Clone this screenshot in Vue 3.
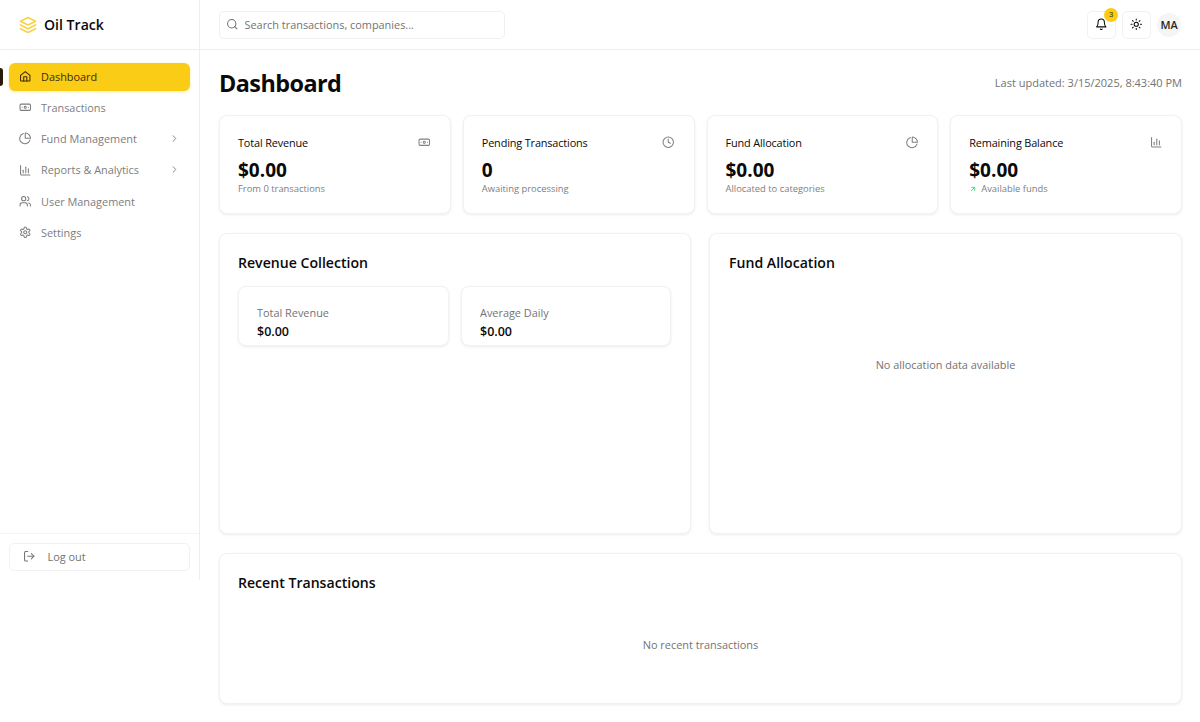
<script setup>
const nav = [
  { label: 'Dashboard', icon: 'home', active: true },
  { label: 'Transactions', icon: 'money' },
  { label: 'Fund Management', icon: 'pie', arrow: true },
  { label: 'Reports & Analytics', icon: 'bars', arrow: true },
  { label: 'User Management', icon: 'users' },
  { label: 'Settings', icon: 'gear' }
]

const stats = [
  { title: 'Total Revenue', value: '$0.00', sub: 'From 0 transactions', icon: 'money' },
  { title: 'Pending Transactions', value: '0', sub: 'Awaiting processing', icon: 'clock' },
  { title: 'Fund Allocation', value: '$0.00', sub: 'Allocated to categories', icon: 'pie' },
  { title: 'Remaining Balance', value: '$0.00', sub: 'Available funds', icon: 'bars', up: true }
]

const paths = {
  home: ['M3 10.5 12 3l9 7.5V20a1 1 0 0 1-1 1H4a1 1 0 0 1-1-1z', 'M9 21v-8h6v8'],
  money: ['M4 6h16a2 2 0 0 1 2 2v8a2 2 0 0 1-2 2H4a2 2 0 0 1-2-2V8a2 2 0 0 1 2-2z', 'M12 10a2 2 0 1 0 0 4 2 2 0 0 0 0-4z', 'M6 12h.01M18 12h.01'],
  pie: ['M21 15.5A10 10 0 1 1 8.5 3', 'M22 12A10 10 0 0 0 12 2v10z'],
  bars: ['M3 3v16a2 2 0 0 0 2 2h16', 'M8 17v-5', 'M13 17V6', 'M18 17v-8'],
  users: ['M16 21v-2a4 4 0 0 0-4-4H6a4 4 0 0 0-4 4v2', 'M9 3a4 4 0 1 0 0 8 4 4 0 0 0 0-8z', 'M22 21v-2a4 4 0 0 0-3-3.87', 'M16 3.13a4 4 0 0 1 0 7.75'],
  gear: ['M12.2 2h-.4a2 2 0 0 0-2 2v.2a2 2 0 0 1-1 1.7l-.4.3a2 2 0 0 1-2 0l-.2-.1a2 2 0 0 0-2.7.7l-.2.4a2 2 0 0 0 .7 2.7l.2.1a2 2 0 0 1 1 1.7v.5a2 2 0 0 1-1 1.8l-.2.1a2 2 0 0 0-.7 2.7l.2.4a2 2 0 0 0 2.7.7l.2-.1a2 2 0 0 1 2 0l.4.3a2 2 0 0 1 1 1.7v.2a2 2 0 0 0 2 2h.4a2 2 0 0 0 2-2v-.2a2 2 0 0 1 1-1.7l.4-.3a2 2 0 0 1 2 0l.2.1a2 2 0 0 0 2.7-.7l.2-.4a2 2 0 0 0-.7-2.7l-.2-.1a2 2 0 0 1-1-1.8v-.5a2 2 0 0 1 1-1.7l.2-.1a2 2 0 0 0 .7-2.7l-.2-.4a2 2 0 0 0-2.7-.7l-.2.1a2 2 0 0 1-2 0l-.4-.3a2 2 0 0 1-1-1.7V4a2 2 0 0 0-2-2z', 'M12 9a3 3 0 1 0 0 6 3 3 0 0 0 0-6z'],
  clock: ['M12 2a10 10 0 1 0 0 20 10 10 0 0 0 0-20z', 'M12 6v6l4 2'],
  chevron: ['m9 18 6-6-6-6'],
  layers: ['M12 2 2 7l10 5 10-5z', 'm2 12 10 5 10-5', 'm2 17 10 5 10-5'],
  search: ['M11 3a8 8 0 1 0 0 16 8 8 0 0 0 0-16z', 'm21 21-4.3-4.3'],
  bell: ['M6 8a6 6 0 0 1 12 0c0 7 3 9 3 9H3s3-2 3-9', 'M10.3 21a1.9 1.9 0 0 0 3.4 0'],
  sun: ['M12 8a4 4 0 1 0 0 8 4 4 0 0 0 0-8z', 'M12 2v2', 'M12 20v2', 'm4.9 4.9 1.4 1.4', 'm17.7 17.7 1.4 1.4', 'M2 12h2', 'M20 12h2', 'm6.3 17.7-1.4 1.4', 'm19.1 4.9-1.4 1.4'],
  logout: ['M9 21H5a2 2 0 0 1-2-2V5a2 2 0 0 1 2-2h4', 'm16 17 5-5-5-5', 'M21 12H9'],
  trend: ['M7 17 17 7', 'M8 7h9v9']
}
</script>

<template>
  <div class="app">
    <aside class="sidebar">
      <div class="brand">
        <svg class="logo" viewBox="0 0 24 24"><path v-for="d in paths.layers" :key="d" :d="d" /></svg>
        <span>Oil Track</span>
      </div>
      <nav class="nav">
        <a v-for="item in nav" :key="item.label" class="nav-item" :class="{ active: item.active }">
          <svg class="icon" viewBox="0 0 24 24"><path v-for="d in paths[item.icon]" :key="d" :d="d" /></svg>
          <span class="nav-label">{{ item.label }}</span>
          <svg v-if="item.arrow" class="icon chevron" viewBox="0 0 24 24"><path v-for="d in paths.chevron" :key="d" :d="d" /></svg>
        </a>
      </nav>
      <div class="logout-wrap">
        <button class="logout">
          <svg class="icon" viewBox="0 0 24 24"><path v-for="d in paths.logout" :key="d" :d="d" /></svg>
          <span>Log out</span>
        </button>
      </div>
    </aside>

    <div class="content">
      <header class="topbar">
        <div class="search">
          <svg class="icon" viewBox="0 0 24 24"><path v-for="d in paths.search" :key="d" :d="d" /></svg>
          <span>Search transactions, companies...</span>
        </div>
        <div class="actions">
          <button class="icon-btn">
            <svg class="icon" viewBox="0 0 24 24"><path v-for="d in paths.bell" :key="d" :d="d" /></svg>
            <span class="badge">3</span>
          </button>
          <button class="icon-btn">
            <svg class="icon" viewBox="0 0 24 24"><path v-for="d in paths.sun" :key="d" :d="d" /></svg>
          </button>
          <div class="avatar">MA</div>
        </div>
      </header>

      <main class="main">
        <div class="page-head">
          <h1>Dashboard</h1>
          <span class="updated">Last updated: 3/15/2025, 8:43:40 PM</span>
        </div>

        <section class="stats">
          <div v-for="s in stats" :key="s.title" class="card stat">
            <div class="stat-head">
              <span>{{ s.title }}</span>
              <svg class="icon" viewBox="0 0 24 24"><path v-for="d in paths[s.icon]" :key="d" :d="d" /></svg>
            </div>
            <div class="stat-value">{{ s.value }}</div>
            <div class="stat-sub">
              <svg v-if="s.up" class="trend" viewBox="0 0 24 24"><path v-for="d in paths.trend" :key="d" :d="d" /></svg>
              <span>{{ s.sub }}</span>
            </div>
          </div>
        </section>

        <section class="panels">
          <div class="card panel revenue">
            <h2>Revenue Collection</h2>
            <div class="mini-row">
              <div class="card mini">
                <div class="mini-label">Total Revenue</div>
                <div class="mini-value">$0.00</div>
              </div>
              <div class="card mini">
                <div class="mini-label">Average Daily</div>
                <div class="mini-value">$0.00</div>
              </div>
            </div>
          </div>
          <div class="card panel">
            <h2>Fund Allocation</h2>
            <div class="empty alloc-empty">No allocation data available</div>
          </div>
        </section>

        <section class="card recent">
          <h2>Recent Transactions</h2>
          <div class="empty recent-empty">No recent transactions</div>
        </section>
      </main>
    </div>
  </div>
</template>

<style>
html, body {
  margin: 0;
  background: #fff;
}
</style>

<style scoped>
.app {
  display: flex;
  align-items: flex-start;
  height: 722px;
  overflow: hidden;
  font-family: "Open Sans", sans-serif;
  color: #0a0a0a;
}

svg {
  fill: none;
  stroke: currentColor;
  stroke-width: 2;
  stroke-linecap: round;
  stroke-linejoin: round;
  flex-shrink: 0;
}

.icon {
  width: 12.5px;
  height: 12.5px;
}

.sidebar {
  width: 199px;
  height: 580px;
  flex-shrink: 0;
  display: flex;
  flex-direction: column;
  border-right: 1px solid #eeeeee;
}

.brand {
  height: 49px;
  display: flex;
  align-items: center;
  gap: 7px;
  padding-left: 19px;
  border-bottom: 1px solid #eeeeee;
  font-size: 14.1px;
  font-weight: 600;
}

.logo {
  width: 18px;
  height: 18px;
  color: #f7d24a;
  stroke-width: 2.3;
}

.nav {
  flex: 1;
  display: flex;
  flex-direction: column;
  gap: 3.3px;
  padding: 13px 9px 0;
}

.nav-item {
  position: relative;
  height: 28px;
  box-sizing: border-box;
  display: flex;
  align-items: center;
  gap: 9.5px;
  padding: 0 10px 2px;
  border-radius: 6px;
  font-size: 10.9px;
  color: #7d7d7d;
}

.nav-label {
  flex: 1;
}

.nav-item.active {
  background: #facc15;
  color: #3f2a08;
  box-shadow: 0 1px 3px rgba(250, 204, 21, 0.4);
}

.nav-item.active::before {
  content: "";
  position: absolute;
  left: -9px;
  top: 5px;
  width: 3px;
  height: 18px;
  border-radius: 0 3px 3px 0;
  background: #2a1a08;
}

.chevron {
  width: 11px;
  height: 11px;
}

.logout-wrap {
  padding: 9px 9px;
  border-top: 1px solid #f4f4f4;
}

.logout {
  width: 100%;
  height: 28px;
  display: flex;
  align-items: center;
  gap: 12px;
  padding: 0 13px 2px;
  background: #fff;
  border: 1px solid #f2f2f2;
  border-radius: 5px;
  font-family: inherit;
  font-size: 10.9px;
  color: #737373;
}

.content {
  flex: 1;
  min-width: 0;
}

.topbar {
  height: 49px;
  display: flex;
  align-items: center;
  justify-content: space-between;
  padding: 0 19px;
  border-bottom: 1px solid #eeeeee;
}

.search {
  width: 286px;
  height: 28px;
  box-sizing: border-box;
  display: flex;
  align-items: center;
  gap: 6px;
  padding: 0 6px;
  border: 1px solid #f0f0f0;
  border-radius: 5px;
  font-size: 10.9px;
  color: #737373;
}

.actions {
  display: flex;
  align-items: center;
  gap: 6px;
}

.icon-btn {
  position: relative;
  width: 29px;
  height: 28px;
  display: flex;
  align-items: center;
  justify-content: center;
  padding: 0;
  background: #fff;
  border: 1px solid #f2f2f2;
  border-radius: 5px;
  color: #0a0a0a;
}

.badge {
  position: absolute;
  top: -4px;
  right: -3px;
  width: 14px;
  height: 14px;
  border-radius: 50%;
  background: #facc15;
  color: #3f2a08;
  font-family: inherit;
  font-size: 7.5px;
  line-height: 14px;
  text-align: center;
}

.avatar {
  width: 24px;
  height: 24px;
  border-radius: 50%;
  background: #f5f5f5;
  display: flex;
  align-items: center;
  justify-content: center;
  font-size: 10.9px;
  font-weight: 600;
  color: #262626;
}

.main {
  padding: 19px 18px 0 19px;
}

.page-head {
  display: flex;
  align-items: center;
  justify-content: space-between;
  height: 28px;
  margin-bottom: 18px;
}

h1 {
  margin: 0;
  font-size: 23.4px;
  font-weight: 700;
  letter-spacing: -0.55px;
}

.updated {
  font-size: 11px;
  color: #737373;
  position: relative;
  top: -1px;
}

.card {
  box-sizing: border-box;
  background: #fff;
  border: 1px solid #f2f2f2;
  border-radius: 8px;
  box-shadow: 0 1px 3px rgba(0, 0, 0, 0.08);
}

.stats {
  display: grid;
  grid-template-columns: repeat(4, 1fr);
  gap: 12px;
}

.stat {
  height: 99px;
  padding: 18px 18px 0;
}

.stat-head {
  display: flex;
  align-items: center;
  justify-content: space-between;
  font-size: 10.9px;
  font-weight: 500;
  letter-spacing: -0.15px;
  height: 17px;
}

.stat-head .icon {
  color: #808080;
  margin-right: 1px;
}

.stat-value {
  font-size: 19px;
  font-weight: 700;
  line-height: 24px;
  margin-top: 7px;
}

.stat-sub {
  display: flex;
  align-items: center;
  gap: 4px;
  font-size: 9.4px;
  line-height: 14px;
  color: #808080;
}

.trend {
  width: 8px;
  height: 8px;
  color: #4ade80;
  stroke-width: 3;
}

.panels {
  display: grid;
  grid-template-columns: 472px 473px;
  justify-content: space-between;
  margin-top: 19px;
}

.panel {
  height: 301px;
  padding: 19px;
}

.panel.revenue {
  padding: 19px 18px;
}

h2 {
  margin: 0;
  font-size: 14.1px;
  font-weight: 600;
  line-height: 20px;
}

.mini-row {
  display: grid;
  grid-template-columns: 211px 210px;
  gap: 12px;
  margin-top: 13px;
}

.mini {
  height: 60px;
  padding: 18px 18px 0;
}

.mini-label {
  font-size: 10.9px;
  line-height: 15px;
  color: #737373;
}

.mini-value {
  font-size: 12.5px;
  font-weight: 600;
  line-height: 17px;
  margin-top: 3px;
}

.empty {
  text-align: center;
  font-size: 10.9px;
  color: #737373;
}

.alloc-empty {
  margin-top: 84px;
}

.recent {
  height: 151px;
  margin-top: 19px;
  padding: 19px 18px;
}

.recent-empty {
  margin-top: 44px;
}
</style>
